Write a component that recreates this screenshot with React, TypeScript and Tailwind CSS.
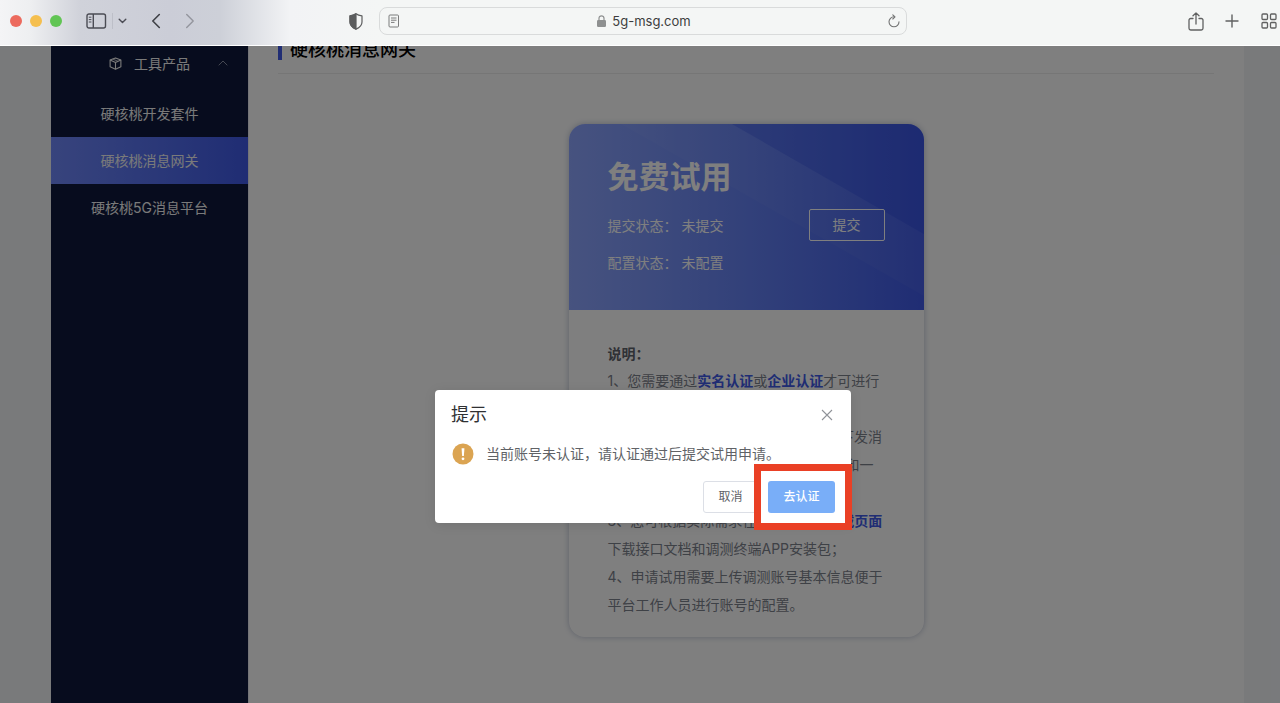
import type { ReactNode } from "react";

const menuItems = [
  { label: "硬核桃开发套件", active: false },
  { label: "硬核桃消息网关", active: true },
  { label: "硬核桃5G消息平台", active: false },
];

function IconButton({ label, className, children }: { label: string; className: string; children: ReactNode }) {
  return (
    <button type="button" aria-label={label} className={className}>
      {children}
    </button>
  );
}

function BrowserBar() {
  return (
    <header className="relative z-10 flex h-[46px] shrink-0 items-center border-b border-white bg-[linear-gradient(90deg,#f4f4f6_0px,#eeeff1_30px,#d0d2da_80px,#cbcdd7_170px,#cdd0d8_220px,#f2f3f5_290px,#f4f6f5_380px)] pb-[3px]">
      <div className="flex w-[379px] shrink-0 items-center pl-[10px]">
        <div className="flex gap-2">
          <span className="size-3 rounded-full bg-[#ec6a5e]" />
          <span className="size-3 rounded-full bg-[#f5bf4f]" />
          <span className="size-3 rounded-full bg-[#61c554]" />
        </div>
        <IconButton label="边栏" className="ml-6 text-[#4b4c54]">
          <svg width="21" height="16" viewBox="0 0 21 16" fill="none" stroke="currentColor" strokeWidth="1.4">
            <rect x="1" y="1" width="18.5" height="14" rx="2" />
            <path d="M7.3 1v14" />
            <path d="M2.8 4.2h2.6M2.8 6.6h2.6M2.8 9h2.6" strokeWidth="1" />
          </svg>
        </IconButton>
        <span className="ml-[5px] h-4 w-px bg-[#bdbfc8]" />
        <IconButton label="标签页组" className="ml-[5px] text-[#4b4c54]">
          <svg width="9" height="6" viewBox="0 0 9 6" fill="none" stroke="currentColor" strokeWidth="1.4" strokeLinecap="round" strokeLinejoin="round">
            <path d="M1.2 1.2l3.3 3.3 3.3-3.3" />
          </svg>
        </IconButton>
        <IconButton label="后退" className="ml-6 text-[#3f4046]">
          <svg width="10" height="16" viewBox="0 0 10 16" fill="none" stroke="currentColor" strokeWidth="1.6" strokeLinecap="round" strokeLinejoin="round">
            <path d="M8.3 1.5L1.8 8l6.5 6.5" />
          </svg>
        </IconButton>
        <IconButton label="前进" className="ml-6 text-[#94959d]">
          <svg width="10" height="16" viewBox="0 0 10 16" fill="none" stroke="currentColor" strokeWidth="1.4" strokeLinecap="round" strokeLinejoin="round">
            <path d="M1.7 1.5L8.2 8l-6.5 6.5" />
          </svg>
        </IconButton>
        <IconButton label="隐私报告" className="mr-4 ml-auto text-[#5c5d5e]">
          <svg width="14" height="17" viewBox="0 0 14 17" fill="none" stroke="currentColor" strokeWidth="1.2" strokeLinejoin="round">
            <path d="M7 .8c1.6 1.3 3.6 1.9 6 2.1v6c0 3.2-2.2 5.5-6 7.2-3.8-1.7-6-4-6-7.2v-6C3.400 2.700 5.400 2.100 7 .8z" />
            <path d="M7 .8v15.300c-3.800-1.700-6-4-6-7.200v-6C3.400 2.700 5.400 2.100 7 .8z" fill="currentColor" />
          </svg>
        </IconButton>
      </div>
      <div className="flex h-7 min-w-0 flex-1 items-center rounded-lg border border-[#d9dbdb] pr-[6px] pl-2">
        <IconButton label="阅读器" className="text-[#7b7c7c]">
          <svg width="12" height="14" viewBox="0 0 12 14" fill="none" stroke="currentColor" strokeWidth="1">
            <rect x="1" y="1" width="9.500" height="12" rx="1" />
            <path d="M3 4h5.500M3 6.200h5.500M3 8.400h3.500" />
          </svg>
        </IconButton>
        <div className="flex flex-1 items-center justify-center gap-[6px]">
          <svg width="9" height="12" viewBox="0 0 9 12" fill="none">
            <rect y="5" width="9" height="7" rx="1.200" fill="#8e9090" />
            <path d="M2 5.500V3.300a2.500 2.500 0 015 0v2.200" stroke="#8e9090" strokeWidth="1.200" />
          </svg>
          <span className="font-['Inter',sans-serif] text-[13px] leading-4 text-[#3d3e3e]">5g-msg.com</span>
        </div>
        <IconButton label="重新载入" className="text-[#727373]">
          <svg width="12" height="14" viewBox="0 0 12 14" fill="none" stroke="currentColor" strokeWidth="1.100" strokeLinecap="round" strokeLinejoin="round">
            <path d="M6 2.800a5 5 0 105 5" />
            <path d="M4.800.800L7 2.900 4.800 5" />
          </svg>
        </IconButton>
      </div>
      <div className="flex w-[373px] shrink-0 items-center justify-end pr-[3px] text-[#606161]">
        <IconButton label="共享" className="">
          <svg width="16" height="19" viewBox="0 0 16 19" fill="none" stroke="currentColor" strokeWidth="1.300" strokeLinecap="round" strokeLinejoin="round">
            <path d="M5 6.500H2.700A1.700 1.700 0 001 8.200v8.100A1.700 1.700 0 002.700 18h10.600a1.700 1.700 0 001.700-1.700V8.200a1.700 1.700 0 00-1.700-1.700H11" />
            <path d="M8 12V1M5 3.800L8 .9l3 2.900" />
          </svg>
        </IconButton>
        <IconButton label="新标签页" className="ml-[21px]">
          <svg width="14" height="14" viewBox="0 0 14 14" fill="none" stroke="currentColor" strokeWidth="1.400" strokeLinecap="round">
            <path d="M7 1v12M1 7h12" />
          </svg>
        </IconButton>
        <IconButton label="标签页概览" className="ml-[22px]">
          <svg width="16" height="16" viewBox="0 0 16 16" fill="none" stroke="currentColor" strokeWidth="1.300">
            <rect x="1" y="1" width="5.500" height="5.500" rx="1" />
            <rect x="9.500" y="1" width="5.500" height="5.500" rx="1" />
            <rect x="1" y="9.500" width="5.500" height="5.500" rx="1" />
            <rect x="9.500" y="9.500" width="5.500" height="5.500" rx="1" />
          </svg>
        </IconButton>
      </div>
    </header>
  );
}

function Sidebar() {
  return (
    <nav className="w-[198px] shrink-0 border-r border-[#e8eaf0] bg-[#0f193c] text-[14px] text-[#f4f4f4]">
      <button type="button" className="flex h-11 w-full items-center pr-5 pb-[10px] pl-[58px]">
        <svg width="13" height="13" viewBox="0 0 14 14" fill="none" stroke="currentColor" strokeWidth="1.200" strokeLinejoin="round">
          <path d="M7 1l5.800 2.300v7.200L7 13.200 1.200 10.500V3.300z" />
          <path d="M1.200 3.300L7 6l5.800-2.700M7 6v7.200" />
          <path d="M4 2.200l5.800 2.500" strokeWidth=".8" />
        </svg>
        <span className="ml-3">工具产品</span>
        <svg className="ml-auto text-[#8b90a5]" width="10" height="6" viewBox="0 0 10 6" fill="none" stroke="currentColor" strokeWidth="1">
          <path d="M.7 5.300L5 1l4.300 4.300" />
        </svg>
      </button>
      <ul>
        {menuItems.map((item) => (
          <li key={item.label}>
            <a
              href="#"
              className={
                item.active
                  ? "flex h-[47px] items-center justify-center bg-linear-to-r from-[#7088fa] to-[#405ae8]"
                  : "flex h-[47px] items-center justify-center"
              }
            >
              {item.label}
            </a>
          </li>
        ))}
      </ul>
    </nav>
  );
}

function TrialCard() {
  return (
    <section className="mx-auto mt-[50px] w-[355px] overflow-hidden rounded-[16px] bg-white shadow-[0_0_6px_rgba(60,80,130,0.35)]">
      <div className="relative h-[186px] bg-linear-to-r from-[#8ea6ff] to-[#405ae8] text-white">
        <svg className="absolute inset-0 size-full" viewBox="0 0 355 186" preserveAspectRatio="none">
          <path d="M52 0H163L355 110V172z" fill="#fff" opacity=".035" />
          <path d="M163 0H355V110z" fill="#2743d8" opacity=".22" />
        </svg>
        <div className="relative px-[39px] pt-[30px]">
          <h2 className="text-[31px] leading-[46px] font-bold">免费试用</h2>
          <div className="mt-[9px] flex h-8 items-center justify-between text-[14px]">
            <p className="flex gap-3">
              <span className="w-[62px] whitespace-nowrap">提交状态：</span>
              <span>未提交</span>
            </p>
            <button type="button" className="h-8 w-[76px] rounded-[2px] border border-white pb-[2px]">提交</button>
          </div>
          <p className="mt-[11px] flex gap-3 text-[14px] leading-[21px]">
            <span className="w-[62px] whitespace-nowrap">配置状态：</span>
            <span>未配置</span>
          </p>
        </div>
      </div>
      <div className="px-[39px] pt-[31px] pb-[18px] text-[14px] leading-7 whitespace-nowrap text-[#7d828c]">
        <h3 className="leading-[26px] font-bold text-[#5e626b]">说明：</h3>
        <p>
          1、您需要通过
          <a href="#" className="font-bold text-[#405ae8]">实名认证</a>或
          <a href="#" className="font-bold text-[#405ae8]">企业认证</a>才可进行
          <br />
          试用申请；
        </p>
        <p>
          2、硬核桃消息网关支持开发者调试并下发消
          <br />
          息，每个账号可免费获得十条文本消息和一
          <br />
          条富媒体消息的试用额度；
        </p>
        <p>
          3、您可根据实际需求在
          <a href="#" className="font-bold text-[#405ae8]">工具产品的下载页面</a>
          <br />
          下载接口文档和调测终端APP安装包；
        </p>
        <p>
          4、申请试用需要上传调测账号基本信息便于
          <br />
          平台工作人员进行账号的配置。
        </p>
      </div>
    </section>
  );
}

function AuthDialog() {
  return (
    <div
      role="dialog"
      aria-modal="true"
      aria-labelledby="dialog-title"
      className="w-[416px] rounded-[4px] bg-white px-4 pt-[14px] pb-[10px] shadow-[0_2px_12px_rgba(0,0,0,0.1)]"
    >
      <div className="flex items-center justify-between">
        <h2 id="dialog-title" className="text-[18px] leading-[22px] text-[#303133]">提示</h2>
        <button type="button" aria-label="关闭" className="mr-[2px] text-[#909399]">
          <svg width="12" height="12" viewBox="0 0 12 12" fill="none" stroke="currentColor" strokeWidth="1.100">
            <path d="M1 1l10 10M11 1L1 11" />
          </svg>
        </button>
      </div>
      <div className="mt-[17px] flex items-center gap-3 pl-[1px]">
        <svg width="22" height="22" viewBox="0 0 22 22">
          <circle cx="11" cy="11" r="10.500" fill="#dba452" />
          <path d="M9.600 5.200h2.800l-.5 7.800h-1.800z" fill="#fff" />
          <circle cx="11" cy="15.800" r="1.400" fill="#fff" />
        </svg>
        <p className="text-[14px] leading-[22px] text-[#606266]">当前账号未认证，请认证通过后提交试用申请。</p>
      </div>
      <div className="mt-4 flex justify-end gap-[10px] text-[12px]">
        <button type="button" className="h-8 w-[55px] rounded-[3px] border border-[#dcdfe6] text-[#606266]">取消</button>
        <div className="relative">
          <button type="button" className="h-8 w-[67px] rounded-[3px] bg-[#79aef8] font-medium text-white">去认证</button>
          <span className="pointer-events-none absolute -inset-y-[17px] -right-[17px] -left-[14px] border-[7px] border-[#ea4025]" />
        </div>
      </div>
    </div>
  );
}

export default function App() {
  return (
    <div className="flex h-screen flex-col overflow-hidden bg-[#f2f4f7] font-['Inter','Noto_Sans_CJK_SC',sans-serif]">
      <BrowserBar />
      <div className="relative flex min-h-0 flex-1 overflow-hidden pr-9 pl-[51px]">
        <Sidebar />
        <main className="min-w-0 flex-1 bg-white pr-[30px] pl-[29px]">
          <div className="-mt-[9px] border-b border-[#ececec] pb-[13px]">
            <h1 className="border-l-4 border-[#405ae8] pt-[3px] pl-2 text-[18px] leading-5 font-medium text-black">硬核桃消息网关</h1>
          </div>
          <TrialCard />
        </main>
        <div className="absolute inset-0 flex items-center justify-center bg-black/50 pt-[164px] pl-[6px]">
          <AuthDialog />
        </div>
      </div>
    </div>
  );
}
